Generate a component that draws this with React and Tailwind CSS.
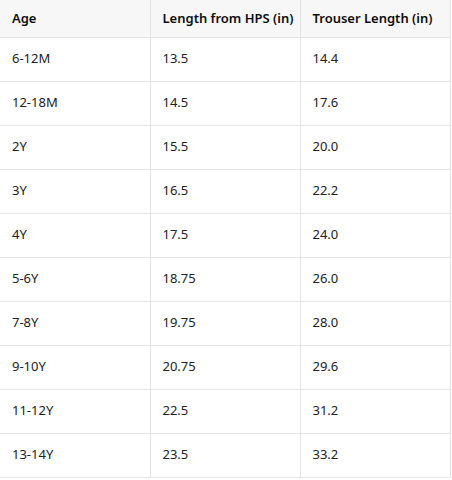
const rows = [
  ["6-12M", "13.5", "14.4"],
  ["12-18M", "14.5", "17.6"],
  ["2Y", "15.5", "20.0"],
  ["3Y", "16.5", "22.2"],
  ["4Y", "17.5", "24.0"],
  ["5-6Y", "18.75", "26.0"],
  ["7-8Y", "19.75", "28.0"],
  ["9-10Y", "20.75", "29.6"],
  ["11-12Y", "22.5", "31.2"],
  ["13-14Y", "23.5", "33.2"],
];

export default function App() {
  return (
    <div className="w-[452px] h-[480px] bg-white overflow-hidden" style={{ fontFamily: '"Noto Sans", "Open Sans", sans-serif' }}>
      <table className="w-[450px] border-collapse table-fixed text-[13px] whitespace-nowrap">
        <colgroup>
          <col className="w-[150px]" />
          <col className="w-[150px]" />
          <col className="w-[150px]" />
        </colgroup>
        <thead>
          <tr className="h-[37px] bg-[#f7f7f7] text-[#0d0d0d]">
            <th className="text-left font-semibold pl-3 pr-0 border-b border-r border-[#e3e3e3]">Age</th>
            <th className="text-left font-semibold pl-3 pr-0 border-b border-r border-[#e3e3e3]">Length from HPS (in)</th>
            <th className="text-left font-semibold pl-3 pr-0 border-b border-r border-[#e3e3e3]">Trouser Length (in)</th>
          </tr>
        </thead>
        <tbody>
          {rows.map((r) => (
            <tr key={r[0]} className="h-[44px] text-[#222]">
              {r.map((c, i) => (
                <td key={i} className="pl-3 pr-0 border-b border-r border-[#e3e3e3]">{c}</td>
              ))}
            </tr>
          ))}
        </tbody>
      </table>
    </div>
  );
}
